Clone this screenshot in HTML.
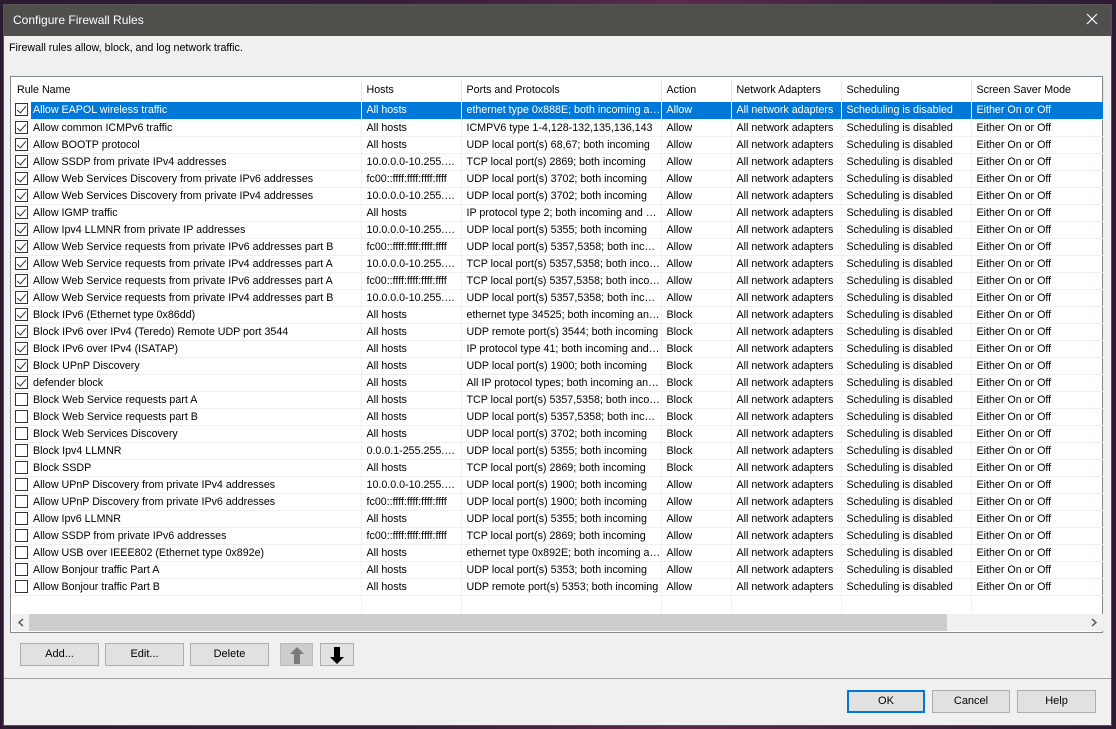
<!DOCTYPE html>
<html><head><meta charset="utf-8"><style>
*{margin:0;padding:0;box-sizing:border-box}
body{width:1116px;height:729px;background:linear-gradient(90deg,#2b1a30,#3a1f3c 40%,#5a2a4a 60%,#2c1b33);position:relative;overflow:hidden;font-family:"Liberation Sans",sans-serif;font-size:10.7px;color:#000}
.win{position:absolute;left:3px;top:4px;width:1109px;height:722px;background:#f0f0f0;border:1px solid #555}
.title{height:31px;background:#4f4f4c;color:#fff;font-size:12px;line-height:31px;padding-left:9px}
.close{position:absolute;right:12px;top:7px;width:14px;height:14px}
.desc{position:absolute;left:5px;top:37px;font-size:10.7px}
.list{position:absolute;left:6px;top:71px;width:1093px;height:557px;background:#fff;border:1px solid #828790}
table{position:absolute;left:0px;top:2px;border-collapse:collapse;table-layout:fixed;width:1092px}
td,th{height:17px;white-space:nowrap;overflow:hidden;text-overflow:ellipsis;font-weight:normal;text-align:left;padding-left:5px;border-right:1px solid #f0f0f0;border-bottom:1px solid #f0f0f0;line-height:16px}
th{height:23px;line-height:21px;border-right:1px solid #e5e5e5;border-bottom:none}
td:first-child{padding-left:4px}
.cb{display:inline-block;width:13px;height:13px;border:1px solid #333;vertical-align:-3px;margin-right:5px;position:relative;background:#fff}
.cb.c::after{content:"";position:absolute;left:3px;top:0px;width:4px;height:8px;border:solid #333;border-width:0 1.3px 1.3px 0;transform:rotate(40deg)}
tr.sel td{background:#0078d7;color:#fff}
tr.sel td:first-child{background:linear-gradient(90deg,#fff 20px,#0078d7 20px);color:#000}
tr.sel td:first-child span.t{color:#fff}
.sb{position:absolute;left:1px;bottom:1px;width:1091px;height:17px;background:#f0f0f0}
.thumb{position:absolute;left:17px;top:0;width:918px;height:17px;background:#cdcdcd}
.btn{position:absolute;height:23px;background:#e1e1e1;border:1px solid #adadad;text-align:center;line-height:21px;font-size:11px}
.sep{position:absolute;left:0;top:673px;width:1107px;height:1px;background:#a0a0a0}
</style></head><body>
<div class="win">
<div class="title">Configure Firewall Rules</div>
<svg class="close" viewBox="0 0 14 14"><path d="M2 2L12 12M12 2L2 12" stroke="#fff" stroke-width="1.2"/></svg>
<div class="desc">Firewall rules allow, block, and log network traffic.</div>
<div class="list">
<table>
<colgroup><col style="width:350px"><col style="width:100px"><col style="width:200px"><col style="width:70px"><col style="width:110px"><col style="width:130px"><col style="width:132px"></colgroup>
<tr><th style="padding-left:6px">Rule Name</th><th>Hosts</th><th>Ports and Protocols</th><th>Action</th><th>Network Adapters</th><th>Scheduling</th><th>Screen Saver Mode</th></tr>
<tr class="sel"><td><i class="cb c"></i><span class="t">Allow EAPOL wireless traffic</span></td><td>All hosts</td><td>ethernet type 0x888E; both incoming and outgoing</td><td>Allow</td><td>All network adapters</td><td>Scheduling is disabled</td><td>Either On or Off</td></tr>
<tr><td><i class="cb c"></i>Allow common ICMPv6 traffic</td><td>All hosts</td><td>ICMPV6 type 1-4,128-132,135,136,143</td><td>Allow</td><td>All network adapters</td><td>Scheduling is disabled</td><td>Either On or Off</td></tr>
<tr><td><i class="cb c"></i>Allow BOOTP protocol</td><td>All hosts</td><td>UDP local port(s) 68,67; both incoming</td><td>Allow</td><td>All network adapters</td><td>Scheduling is disabled</td><td>Either On or Off</td></tr>
<tr><td><i class="cb c"></i>Allow SSDP from private IPv4 addresses</td><td>10.0.0.0-10.255.255.255</td><td>TCP local port(s) 2869; both incoming</td><td>Allow</td><td>All network adapters</td><td>Scheduling is disabled</td><td>Either On or Off</td></tr>
<tr><td><i class="cb c"></i>Allow Web Services Discovery from private IPv6 addresses</td><td>fc00::ffff:ffff:ffff:ffff</td><td>UDP local port(s) 3702; both incoming</td><td>Allow</td><td>All network adapters</td><td>Scheduling is disabled</td><td>Either On or Off</td></tr>
<tr><td><i class="cb c"></i>Allow Web Services Discovery from private IPv4 addresses</td><td>10.0.0.0-10.255.255.255</td><td>UDP local port(s) 3702; both incoming</td><td>Allow</td><td>All network adapters</td><td>Scheduling is disabled</td><td>Either On or Off</td></tr>
<tr><td><i class="cb c"></i>Allow IGMP traffic</td><td>All hosts</td><td>IP protocol type 2; both incoming and outgoing</td><td>Allow</td><td>All network adapters</td><td>Scheduling is disabled</td><td>Either On or Off</td></tr>
<tr><td><i class="cb c"></i>Allow Ipv4 LLMNR from private IP addresses</td><td>10.0.0.0-10.255.255.255</td><td>UDP local port(s) 5355; both incoming</td><td>Allow</td><td>All network adapters</td><td>Scheduling is disabled</td><td>Either On or Off</td></tr>
<tr><td><i class="cb c"></i>Allow Web Service requests from private IPv6 addresses part B</td><td>fc00::ffff:ffff:ffff:ffff</td><td>UDP local port(s) 5357,5358; both incoming</td><td>Allow</td><td>All network adapters</td><td>Scheduling is disabled</td><td>Either On or Off</td></tr>
<tr><td><i class="cb c"></i>Allow Web Service requests from private IPv4 addresses part A</td><td>10.0.0.0-10.255.255.255</td><td>TCP local port(s) 5357,5358; both incoming</td><td>Allow</td><td>All network adapters</td><td>Scheduling is disabled</td><td>Either On or Off</td></tr>
<tr><td><i class="cb c"></i>Allow Web Service requests from private IPv6 addresses part A</td><td>fc00::ffff:ffff:ffff:ffff</td><td>TCP local port(s) 5357,5358; both incoming</td><td>Allow</td><td>All network adapters</td><td>Scheduling is disabled</td><td>Either On or Off</td></tr>
<tr><td><i class="cb c"></i>Allow Web Service requests from private IPv4 addresses part B</td><td>10.0.0.0-10.255.255.255</td><td>UDP local port(s) 5357,5358; both incoming</td><td>Allow</td><td>All network adapters</td><td>Scheduling is disabled</td><td>Either On or Off</td></tr>
<tr><td><i class="cb c"></i>Block IPv6 (Ethernet type 0x86dd)</td><td>All hosts</td><td>ethernet type 34525; both incoming and outgoing</td><td>Block</td><td>All network adapters</td><td>Scheduling is disabled</td><td>Either On or Off</td></tr>
<tr><td><i class="cb c"></i>Block IPv6 over IPv4 (Teredo) Remote UDP port 3544</td><td>All hosts</td><td>UDP remote port(s) 3544; both incoming</td><td>Block</td><td>All network adapters</td><td>Scheduling is disabled</td><td>Either On or Off</td></tr>
<tr><td><i class="cb c"></i>Block IPv6 over IPv4 (ISATAP)</td><td>All hosts</td><td>IP protocol type 41; both incoming and outgoing</td><td>Block</td><td>All network adapters</td><td>Scheduling is disabled</td><td>Either On or Off</td></tr>
<tr><td><i class="cb c"></i>Block UPnP Discovery</td><td>All hosts</td><td>UDP local port(s) 1900; both incoming</td><td>Block</td><td>All network adapters</td><td>Scheduling is disabled</td><td>Either On or Off</td></tr>
<tr><td><i class="cb c"></i>defender block</td><td>All hosts</td><td>All IP protocol types; both incoming and outgoing</td><td>Block</td><td>All network adapters</td><td>Scheduling is disabled</td><td>Either On or Off</td></tr>
<tr><td><i class="cb"></i>Block Web Service requests part A</td><td>All hosts</td><td>TCP local port(s) 5357,5358; both incoming</td><td>Block</td><td>All network adapters</td><td>Scheduling is disabled</td><td>Either On or Off</td></tr>
<tr><td><i class="cb"></i>Block Web Service requests part B</td><td>All hosts</td><td>UDP local port(s) 5357,5358; both incoming</td><td>Block</td><td>All network adapters</td><td>Scheduling is disabled</td><td>Either On or Off</td></tr>
<tr><td><i class="cb"></i>Block Web Services Discovery</td><td>All hosts</td><td>UDP local port(s) 3702; both incoming</td><td>Block</td><td>All network adapters</td><td>Scheduling is disabled</td><td>Either On or Off</td></tr>
<tr><td><i class="cb"></i>Block Ipv4 LLMNR</td><td>0.0.0.1-255.255.255.255</td><td>UDP local port(s) 5355; both incoming</td><td>Block</td><td>All network adapters</td><td>Scheduling is disabled</td><td>Either On or Off</td></tr>
<tr><td><i class="cb"></i>Block SSDP</td><td>All hosts</td><td>TCP local port(s) 2869; both incoming</td><td>Block</td><td>All network adapters</td><td>Scheduling is disabled</td><td>Either On or Off</td></tr>
<tr><td><i class="cb"></i>Allow UPnP Discovery from private IPv4 addresses</td><td>10.0.0.0-10.255.255.255</td><td>UDP local port(s) 1900; both incoming</td><td>Allow</td><td>All network adapters</td><td>Scheduling is disabled</td><td>Either On or Off</td></tr>
<tr><td><i class="cb"></i>Allow UPnP Discovery from private IPv6 addresses</td><td>fc00::ffff:ffff:ffff:ffff</td><td>UDP local port(s) 1900; both incoming</td><td>Allow</td><td>All network adapters</td><td>Scheduling is disabled</td><td>Either On or Off</td></tr>
<tr><td><i class="cb"></i>Allow Ipv6 LLMNR</td><td>All hosts</td><td>UDP local port(s) 5355; both incoming</td><td>Allow</td><td>All network adapters</td><td>Scheduling is disabled</td><td>Either On or Off</td></tr>
<tr><td><i class="cb"></i>Allow SSDP from private IPv6 addresses</td><td>fc00::ffff:ffff:ffff:ffff</td><td>TCP local port(s) 2869; both incoming</td><td>Allow</td><td>All network adapters</td><td>Scheduling is disabled</td><td>Either On or Off</td></tr>
<tr><td><i class="cb"></i>Allow USB over IEEE802 (Ethernet type 0x892e)</td><td>All hosts</td><td>ethernet type 0x892E; both incoming and outgoing</td><td>Allow</td><td>All network adapters</td><td>Scheduling is disabled</td><td>Either On or Off</td></tr>
<tr><td><i class="cb"></i>Allow Bonjour traffic Part A</td><td>All hosts</td><td>UDP local port(s) 5353; both incoming</td><td>Allow</td><td>All network adapters</td><td>Scheduling is disabled</td><td>Either On or Off</td></tr>
<tr><td><i class="cb"></i>Allow Bonjour traffic Part B</td><td>All hosts</td><td>UDP remote port(s) 5353; both incoming</td><td>Allow</td><td>All network adapters</td><td>Scheduling is disabled</td><td>Either On or Off</td></tr>
<tr><td style="height:24px"></td><td></td><td></td><td></td><td></td><td></td><td></td></tr>
</table>
<div class="sb"><div class="thumb"></div>
<svg style="position:absolute;left:5px;top:4px" width="8" height="9"><path d="M6 1L2 4.5L6 8" stroke="#606060" stroke-width="1.5" fill="none"/></svg>
<svg style="position:absolute;right:5px;top:4px" width="8" height="9"><path d="M2 1L6 4.5L2 8" stroke="#606060" stroke-width="1.5" fill="none"/></svg>
</div>
</div>
<div class="btn" style="left:16px;top:638px;width:79px">Add...</div>
<div class="btn" style="left:101px;top:638px;width:79px">Edit...</div>
<div class="btn" style="left:186px;top:638px;width:79px">Delete</div>
<div class="btn" style="left:276px;top:638px;width:33px;background:#cccccc;border-color:#bcbcbc"><svg width="20" height="20" style="margin-top:1px"><path d="M10 2L17 9H13V19H7V9H3Z" fill="#7a7a7a"/></svg></div>
<div class="btn" style="left:316px;top:638px;width:34px"><svg width="20" height="20" style="margin-top:1px"><path d="M10 19L17 12H13V2H7V12H3Z" fill="#000"/></svg></div>
<div class="sep"></div>
<div class="btn" style="left:843px;top:685px;width:78px;border:2px solid #0078d7;line-height:19px">OK</div>
<div class="btn" style="left:928px;top:685px;width:78px">Cancel</div>
<div class="btn" style="left:1013px;top:685px;width:79px">Help</div>
</div>
</body></html>
